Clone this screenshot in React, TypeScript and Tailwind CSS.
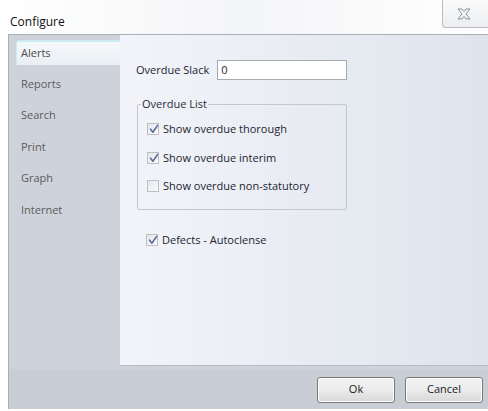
import React from "react";

const tabs = ["Alerts", "Reports", "Search", "Print", "Graph", "Internet"];

function CheckBox({ checked }: { checked: boolean }) {
  return (
    <span className="relative inline-block h-[12px] w-[12px] shrink-0 border border-[#bcc0c6] bg-gradient-to-br from-[#e3e6ea] to-[#fbfbfc]">
      {checked && (
        <svg viewBox="0 0 12 12" className="absolute left-[0px] top-[-1px] h-[12px] w-[12px]">
          <path d="M2.6 6.2 L4.9 9.2 L9.6 2.4" fill="none" stroke="#5a6b9a" strokeWidth="1.6" strokeLinecap="round" strokeLinejoin="round" />
        </svg>
      )}
    </span>
  );
}

function CheckRow({ checked, label }: { checked: boolean; label: string }) {
  return (
    <div className="flex items-center gap-[4px]">
      <CheckBox checked={checked} />
      <span>{label}</span>
    </div>
  );
}

function Button({ label }: { label: string }) {
  return (
    <button className="h-[26px] w-[78px] rounded-[3px] border border-[#7a7a7a] bg-gradient-to-b from-[#f3f3f3] via-[#ebebeb] to-[#d8d8d8] text-[11px] text-[#1b1b1b] shadow-[inset_0_0_0_1px_#fcfcfc]">
      {label}
    </button>
  );
}

export default function App() {
  return (
    <div
      className="flex h-[411px] w-[488px] flex-col overflow-hidden bg-white text-[11px]"
      style={{ fontFamily: '"Open Sans", "Noto Sans", sans-serif' }}
    >
      {/* title bar */}
      <div className="relative flex h-[34px] shrink-0 items-center bg-gradient-to-r from-white via-[#f4f5f7] to-white pl-[10px] pt-[9px]">
        <span className="text-[12px] text-[#111]">Configure</span>
        <div className="absolute right-[-4px] top-[0px] flex h-[28px] w-[50px] items-center justify-center rounded-b-[4px] border border-t-0 border-[#b9bcc2] bg-gradient-to-b from-[#fbfbfb] to-[#eceef0]">
          <svg viewBox="0 0 16 12" className="ml-[-6px] h-[12px] w-[16px]">
            <path
              d="M2 1 L6 1 L8 3.5 L10 1 L14 1 L10 6 L14 11 L10 11 L8 8.5 L6 11 L2 11 L6 6 Z"
              fill="#f4f5f6"
              stroke="#8d9096"
              strokeWidth="1"
              strokeLinejoin="round"
            />
          </svg>
        </div>
      </div>

      {/* body */}
      <div className="flex flex-1 pl-[8px] pb-[2px]">
        <div className="flex flex-1 flex-col border-l border-t border-[#a9aeb7] bg-[#ced2db]">
          <div className="flex flex-1">
            {/* side tabs */}
            <div className="flex w-[111px] shrink-0 flex-col pt-[5px] pl-[7px] pb-[3px]">
              {tabs.map((t, i) =>
                i === 0 ? (
                  <div
                    key={t}
                    className="flex h-[25px] items-center rounded-tl-[3px] border-t-2 border-l border-[#c8ecf1] bg-gradient-to-b from-[#f6f9fb] to-[#e9eef3] pl-[4px] text-[#4a4a4a]"
                  >
                    {t}
                  </div>
                ) : (
                  <div key={t} className="flex h-[31.6px] items-center pl-[5px] pt-[6px] text-[#5c5c5c]">
                    {t}
                  </div>
                )
              )}
            </div>

            {/* page */}
            <div className="mb-[3px] flex-1 border-b border-[#b7bbc3] bg-gradient-to-r from-[#f2f4f9] to-[#dfe4ec] pl-[16px] pt-[25px] text-[#1c1e33]">
              <div className="flex items-center gap-[8px]">
                <span>Overdue Slack</span>
                <div className="flex h-[20px] w-[130px] items-center border border-[#a6a9b0] bg-white pl-[3px]">0</div>
              </div>

              <div className="relative ml-[1px] mt-[24px] h-[106px] w-[210px] rounded-[2px] border border-[#c3c7ce]">
                <span className="absolute left-[3px] top-[-9px] bg-[#eff1f6] px-[1px] text-[#2a2c3e]">Overdue List</span>
                <div className="flex flex-col gap-[12px] pl-[9px] pt-[16px]">
                  <CheckRow checked label="Show overdue thorough" />
                  <CheckRow checked label="Show overdue interim" />
                  <CheckRow checked={false} label="Show overdue non-statutory" />
                </div>
              </div>

              <div className="mt-[22px] pl-[10px]">
                <CheckRow checked label="Defects - Autoclense" />
              </div>
            </div>
          </div>

          {/* button bar */}
          <div className="flex h-[40px] shrink-0 items-center justify-end gap-[10px] bg-[#c9cdd5] pr-[5px] pt-[1px]">
            <Button label="Ok" />
            <Button label="Cancel" />
          </div>
        </div>
      </div>
    </div>
  );
}
